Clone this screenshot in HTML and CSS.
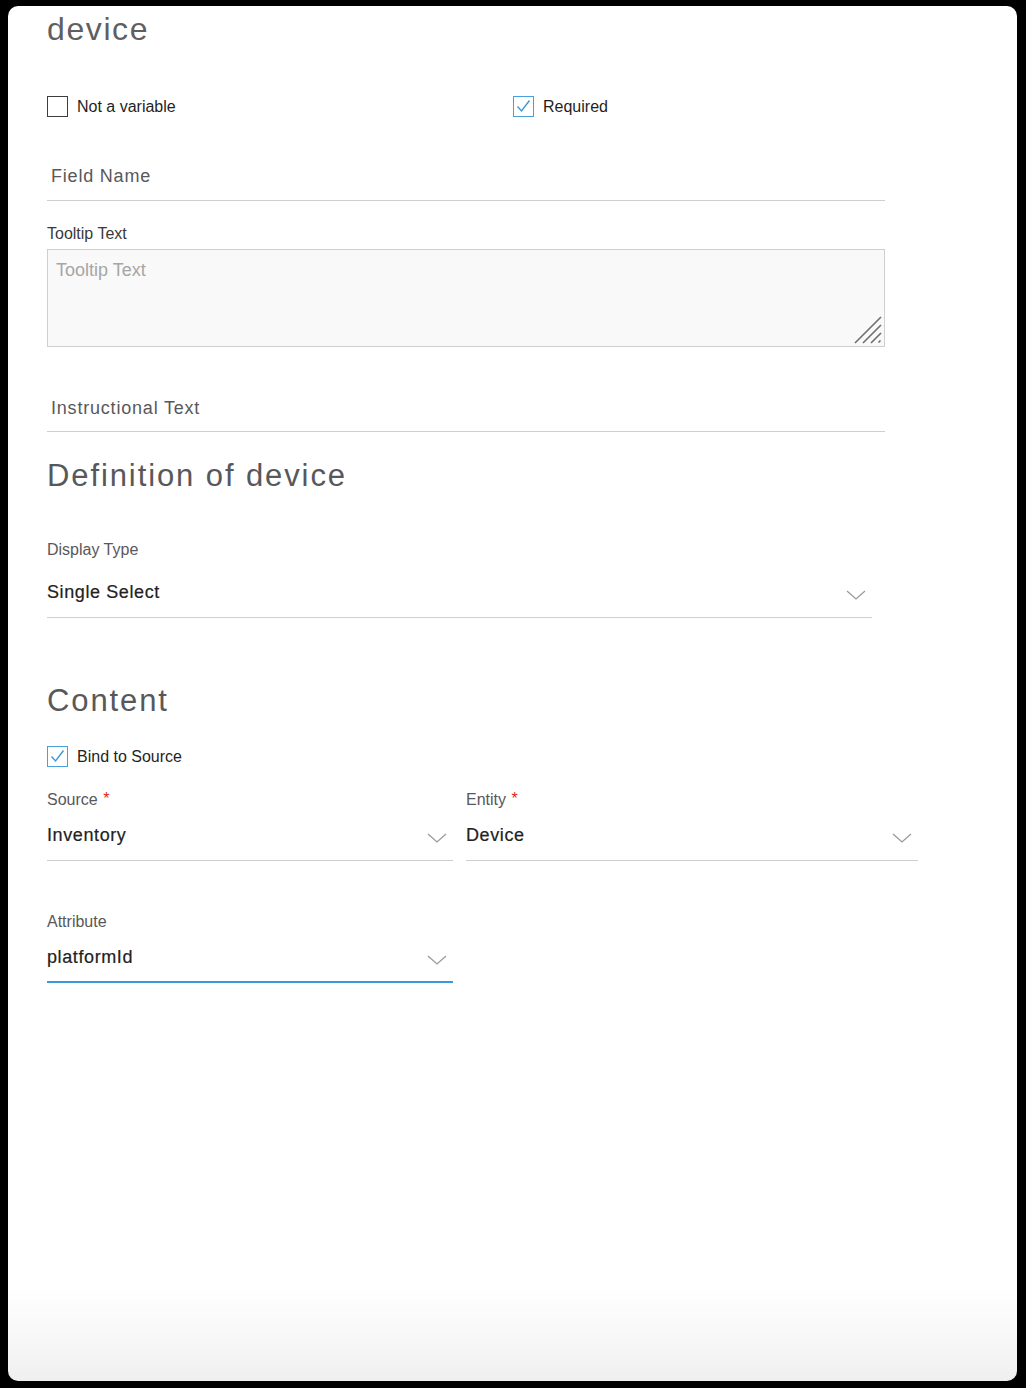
FILE: index.html
```html
<!DOCTYPE html>
<html>
<head>
<meta charset="utf-8">
<link rel="stylesheet" href="styles.css">
</head>
<body>
<div class="panel">
  <h1 class="title">device</h1>

  <div class="checks-row">
    <label class="check">
      <span class="box"></span>
      <span class="check-label">Not a variable</span>
    </label>
    <label class="check">
      <span class="box checked"><svg viewBox="0 0 20 20" width="20" height="20"><path d="M4.5 10.5 L8.5 15 L16.5 4.5" fill="none" stroke="#3a9ad9" stroke-width="1.4"/></svg></span>
      <span class="check-label">Required</span>
    </label>
  </div>

  <div class="line-input first">Field Name</div>

  <div class="label tooltip-label">Tooltip Text</div>
  <div class="textarea">
    <span class="placeholder">Tooltip Text</span>
    <svg class="grip" viewBox="0 0 28 28" width="28" height="28">
      <path d="M1 27 L27 1 M9 27 L27 9 M17 27 L27 17 M24.5 26.5 L26.5 24.5" stroke="#6e6e6e" stroke-width="1.6" fill="none"/>
    </svg>
  </div>

  <div class="line-input instr">Instructional Text</div>

  <h2 class="section def">Definition of device</h2>

  <div class="label display-label">Display Type</div>
  <div class="select wide">
    <span class="value">Single Select</span>
    <svg class="chev" viewBox="0 0 20 10" width="20" height="10"><path d="M1 1 L10 9 L19 1" fill="none" stroke="#9a9a9a" stroke-width="1.3"/></svg>
  </div>

  <h2 class="section content">Content</h2>

  <label class="check bind">
    <span class="box checked"><svg viewBox="0 0 20 20" width="20" height="20"><path d="M4.5 10.5 L8.5 15 L16.5 4.5" fill="none" stroke="#3a9ad9" stroke-width="1.4"/></svg></span>
    <span class="check-label">Bind to Source</span>
  </label>

  <div class="pair">
    <div class="field source">
      <div class="label">Source <span class="req">*</span></div>
      <div class="select">
        <span class="value">Inventory</span>
        <svg class="chev" viewBox="0 0 20 10" width="20" height="10"><path d="M1 1 L10 9 L19 1" fill="none" stroke="#9a9a9a" stroke-width="1.3"/></svg>
      </div>
    </div>
    <div class="field entity">
      <div class="label">Entity <span class="req">*</span></div>
      <div class="select">
        <span class="value">Device</span>
        <svg class="chev" viewBox="0 0 20 10" width="20" height="10"><path d="M1 1 L10 9 L19 1" fill="none" stroke="#9a9a9a" stroke-width="1.3"/></svg>
      </div>
    </div>
  </div>

  <div class="field attribute">
    <div class="label">Attribute</div>
    <div class="select active">
      <span class="value">platformId</span>
      <svg class="chev" viewBox="0 0 20 10" width="20" height="10"><path d="M1 1 L10 9 L19 1" fill="none" stroke="#9a9a9a" stroke-width="1.3"/></svg>
    </div>
  </div>
</div>
</body>
</html>
```

FILE: styles.css
```css
html, body {
  margin: 0;
  padding: 0;
  background: #000;
}
body {
  width: 1026px;
  height: 1388px;
  overflow: hidden;
  font-family: "Liberation Sans", Arial, sans-serif;
}
.panel {
  box-sizing: border-box;
  margin: 6px 9px 0 8px;
  height: 1375px;
  border-radius: 10px;
  background: linear-gradient(to bottom, #ffffff 0, #ffffff 1280px, #f8f8f8 1330px, #efefef 1375px);
  padding: 0 0 0 39px;
  overflow: hidden;
}
.title {
  margin: 5px 0 0;
  font-size: 32px;
  line-height: 36px;
  font-weight: normal;
  color: #5f5f62;
  letter-spacing: 1.6px;
}
.checks-row {
  margin-top: 49px;
  display: grid;
  grid-template-columns: 466px 1fr;
  height: 20px;
}
.check {
  display: flex;
  align-items: center;
  gap: 9px;
  height: 20px;
}
.box {
  box-sizing: border-box;
  width: 21px;
  height: 21px;
  border: 1px solid #3d3d40;
  display: block;
  position: relative;
}
.box.checked {
  border-color: #4aa0da;
}
.box svg {
  display: block;
  margin: -1px;
}
.check-label {
  font-size: 16px;
  color: #1f1f1f;
  line-height: 20px;
  position: relative;
  top: 1px;
}
.line-input {
  width: 838px;
  box-sizing: border-box;
  padding: 0 4px 12px;
  border-bottom: 1px solid #cfcfcf;
  font-size: 18px;
  line-height: 24px;
  color: #58585b;
  letter-spacing: 0.8px;
}
.line-input.first {
  margin-top: 48px;
}
.label {
  font-size: 16px;
  line-height: 20px;
  color: #58585b;
}
.tooltip-label {
  color: #39393b;
  margin-top: 23px;
}
.textarea {
  margin-top: 5px;
  box-sizing: border-box;
  width: 838px;
  height: 98px;
  border: 1px solid #cfcfcf;
  background: #f9f9f9;
  padding: 8px 8px;
  position: relative;
}
.placeholder {
  font-size: 18px;
  line-height: 24px;
  color: #a6a6a6;
}
.grip {
  position: absolute;
  right: 2px;
  bottom: 2px;
}
.line-input.instr {
  margin-top: 49px;
  padding-bottom: 11px;
}
.section {
  margin: 0;
  font-size: 31px;
  line-height: 36px;
  font-weight: normal;
  color: #58585b;
  letter-spacing: 1.9px;
}
.section.def {
  margin-top: 26px;
}
.display-label {
  margin-top: 46px;
}
.select {
  box-sizing: border-box;
  display: flex;
  align-items: center;
  justify-content: space-between;
  padding: 0 6px 14px 0;
  border-bottom: 1px solid #cfcfcf;
  height: 38px;
}
.select.wide {
  margin-top: 20px;
  width: 825px;
}
.select .value {
  font-size: 18px;
  line-height: 24px;
  color: #222;
  letter-spacing: 0.6px;
  -webkit-text-stroke: 0.2px #222;
}
.chev {
  display: block;
  margin-top: 6px;
}
.section.content {
  margin-top: 65px;
}
.check.bind {
  margin-top: 27px;
}
.pair {
  display: flex;
  gap: 13px;
  margin-top: 23px;
}
.field.source {
  width: 406px;
}
.field.entity {
  width: 452px;
}
.field .select {
  margin-top: 13px;
}
.req {
  color: #e2231a;
  font-size: 16px;
  vertical-align: 1px;
  margin-left: 1px;
}
.field.attribute {
  margin-top: 51px;
  width: 406px;
}
.select.active {
  border-bottom: 2px solid #3a9ad9;
  padding-bottom: 12px;
}
```
